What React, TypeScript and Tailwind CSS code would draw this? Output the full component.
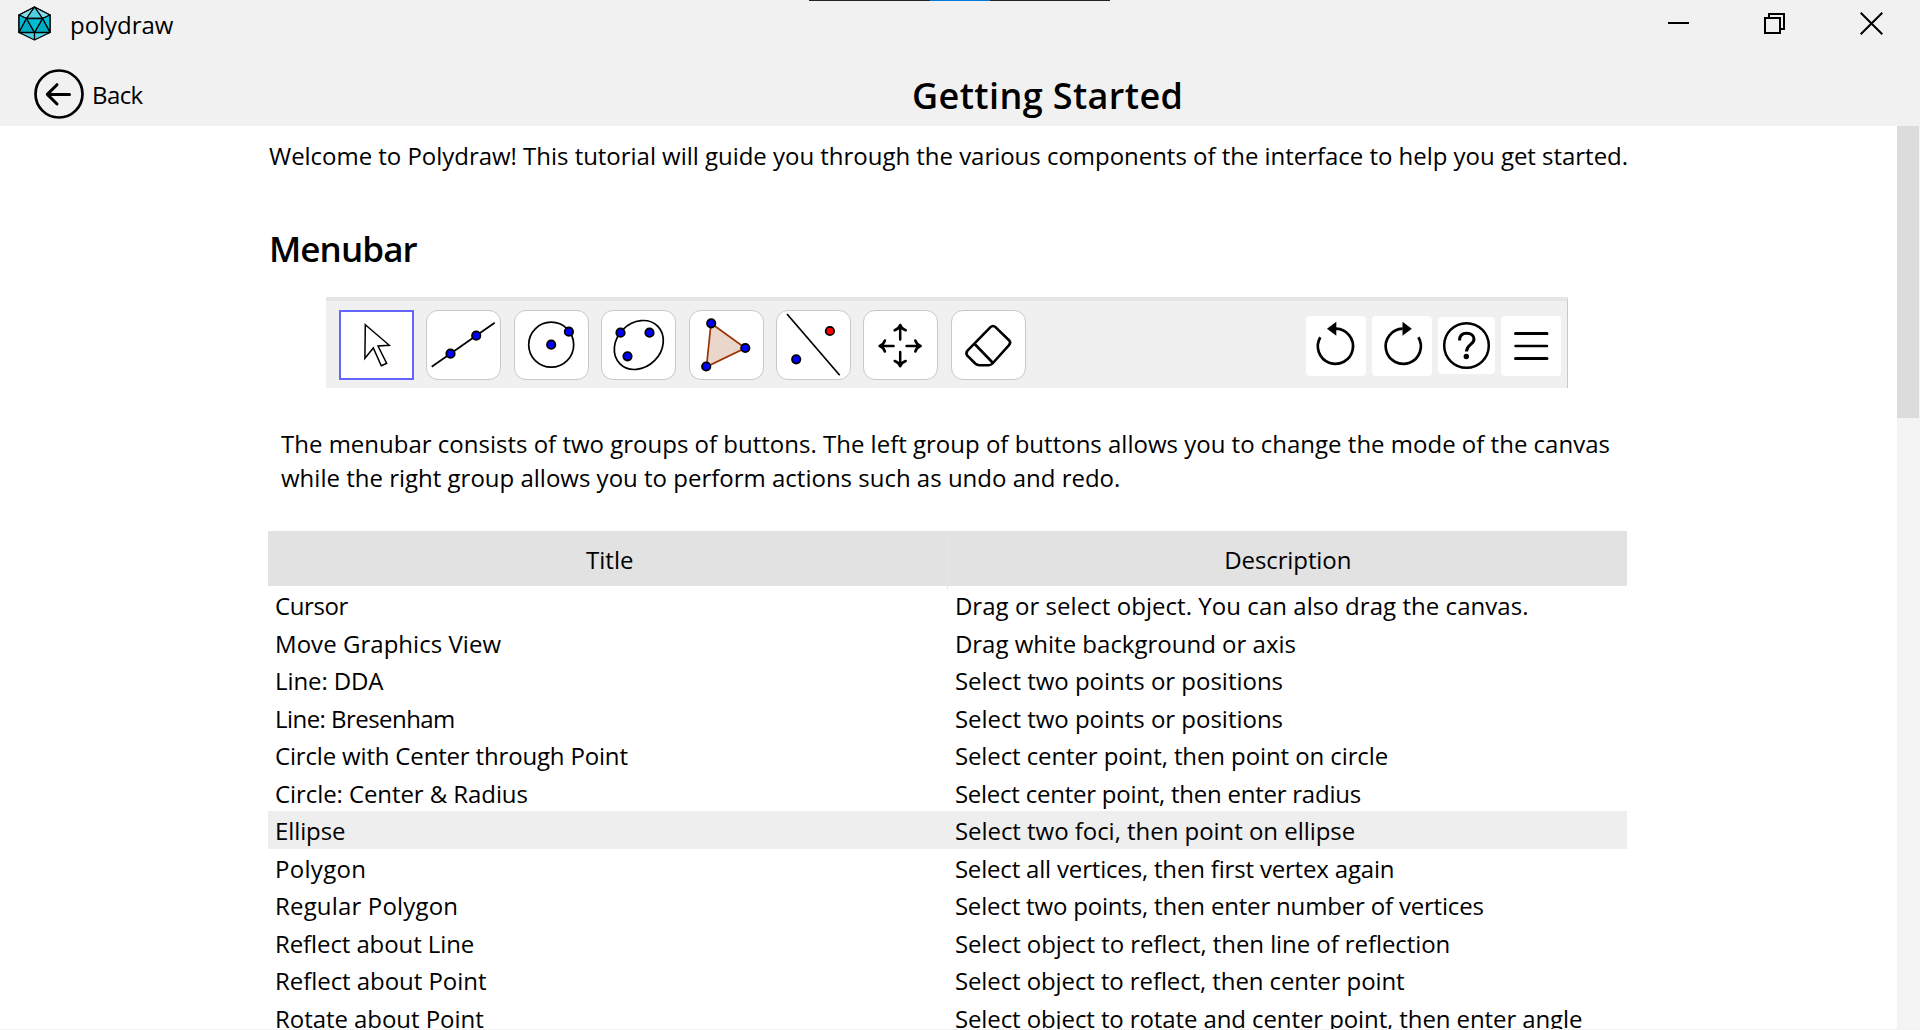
import type { ReactNode } from "react";

type Row = { title: string; titleClass: string; text: string; textClass: string; active?: boolean };

const rows: Row[] = [
  { title: "Cursor", titleClass: "tracking-[-0.4px]", text: "Drag or select object. You can also drag the canvas.", textClass: "tracking-[0.05px]" },
  { title: "Move Graphics View", titleClass: "tracking-[0.04px]", text: "Drag white background or axis", textClass: "tracking-[0px]" },
  { title: "Line: DDA", titleClass: "tracking-[-0.1px]", text: "Select two points or positions", textClass: "tracking-[-0.02px]" },
  { title: "Line: Bresenham", titleClass: "tracking-[-0.55px]", text: "Select two points or positions", textClass: "tracking-[-0.02px]" },
  { title: "Circle with Center through Point", titleClass: "tracking-[-0.17px]", text: "Select center point, then point on circle", textClass: "tracking-[-0.1px]" },
  { title: "Circle: Center & Radius", titleClass: "tracking-[-0.08px]", text: "Select center point, then enter radius", textClass: "tracking-[-0.24px]" },
  { title: "Ellipse", titleClass: "tracking-[-0.1px]", text: "Select two foci, then point on ellipse", textClass: "tracking-[-0.04px]", active: true },
  { title: "Polygon", titleClass: "tracking-[0.3px]", text: "Select all vertices, then first vertex again", textClass: "tracking-[-0.18px]" },
  { title: "Regular Polygon", titleClass: "tracking-[0.17px]", text: "Select two points, then enter number of vertices", textClass: "tracking-[-0.18px]" },
  { title: "Reflect about Line", titleClass: "tracking-[-0.1px]", text: "Select object to reflect, then line of reflection", textClass: "tracking-[-0.08px]" },
  { title: "Reflect about Point", titleClass: "tracking-[-0.05px]", text: "Select object to reflect, then center point", textClass: "tracking-[-0.1px]" },
  { title: "Rotate about Point", titleClass: "tracking-[-0.05px]", text: "Select object to rotate and center point, then enter angle", textClass: "tracking-[-0.1px]" },
];

function Dot({ x, y, color = "#0000ff" }: { x: number; y: number; color?: string }) {
  return <circle cx={x} cy={y} r="4.2" fill={color} stroke="#000" strokeWidth="1.8" />;
}

function Tool({ children, selected = false }: { children: ReactNode; selected?: boolean }) {
  return (
    <div
      className={
        selected
          ? "h-[70px] w-[75px] border-2 border-[#6464ff] bg-white"
          : "h-[70px] w-[75px] rounded-[12px] border border-[#c8c8c8] bg-white"
      }
    >
      <svg
        viewBox="0 0 75 70"
        className={selected ? "-m-0.5 h-[70px] w-[75px]" : "-m-px h-[70px] w-[75px]"}
        fill="none"
        stroke="#000"
        strokeWidth="1.7"
      >
        {children}
      </svg>
    </div>
  );
}

function Toolbar() {
  return (
    <div className="flex h-[91px] w-[1242px] justify-between border-t-4 border-r border-t-[#e5e5e5] border-r-[#c8c8c8] bg-[#f0f0f0] pr-[6px] pl-[13px]">
      <div className="flex gap-[12.4px] pt-[9px]">
        <Tool selected>
          <path d="M26.3 14.7 50.3 35.3 39 36 47.7 53.3 42.3 55.7 34.3 38 25.9 48.3Z" strokeWidth="1.5" />
        </Tool>
        <Tool>
          <path d="M5.7 56.7 68.7 12.7" />
          <Dot x={24.5} y={43.7} />
          <Dot x={50.2} y={25.7} />
        </Tool>
        <Tool>
          <circle cx="37.2" cy="34.7" r="22.5" />
          <Dot x={37.2} y={34.7} />
          <Dot x={54.9} y={21.7} />
        </Tool>
        <Tool>
          <ellipse cx="37.8" cy="35" rx="26.6" ry="22.2" transform="rotate(-45 37.8 35)" />
          <Dot x={19.5} y={22.7} />
          <Dot x={48.5} y={22.7} />
          <Dot x={26.5} y={46.3} />
        </Tool>
        <Tool>
          <path d="M22 13.3 56.3 38 17.5 56.7Z" fill="#ebd6cc" stroke="#993300" />
          <Dot x={22.2} y={13.3} />
          <Dot x={56.3} y={38} />
          <Dot x={17.2} y={56.5} />
        </Tool>
        <Tool>
          <path d="M11 4 63.7 65.3" />
          <Dot x={53.9} y={21} color="#ff0000" />
          <Dot x={20.2} y={49.3} />
        </Tool>
        <Tool>
          <g strokeWidth="2.5" strokeLinecap="round" strokeLinejoin="round">
            <path d="M37.2 15v14.5M31.7 20.3c3-1 4.6-2.7 5.5-5.3.9 2.6 2.5 4.3 5.5 5.3" />
            <path d="M37.2 42v14.3M31.7 51c3 1 4.6 2.7 5.5 5.3.9-2.6 2.5-4.3 5.5-5.3" />
            <path d="M16.6 36h14M21.9 30.5c-1 3-2.7 4.6-5.3 5.5 2.6.9 4.3 2.5 5.3 5.5" />
            <path d="M43.6 36h14M52.3 30.5c1 3 2.7 4.6 5.3 5.5-2.6.9-4.3 2.5-5.3 5.5" />
          </g>
        </Tool>
        <Tool>
          <path
            d="M39.5 17.2Q42 14.7 44.5 17.2L58 30.2Q60.3 32.7 58 35.2L41.5 53.5Q40 55.2 37.5 55.2H28.5Q26 55.2 24.2 53.5L16.3 45.6Q14.4 43.2 16.5 40.6ZM23.7 34 41.5 52.5"
            strokeWidth="2.6"
            strokeLinejoin="round"
          />
        </Tool>
      </div>
      <div className="flex items-start gap-[6px] pt-[15px]">
        <div className="size-[60px] rounded-[4px] bg-white">
          <svg viewBox="0 0 60 60" fill="none" stroke="#000" strokeWidth="2.7">
            <path d="M14.3 21.3A17.6 17.6 0 1 0 30 12.7" />
            <path d="M21 12.7 30.3 5.7V19.7Z" fill="#000" stroke="none" />
          </svg>
        </div>
        <div className="size-[60px] rounded-[4px] bg-white">
          <svg viewBox="0 0 60 60" fill="none" stroke="#000" strokeWidth="2.7">
            <path d="M46.4 21.3A17.6 17.6 0 1 1 30.7 12.7" />
            <path d="M39.8 12.7 30.5 5.7V19.7Z" fill="#000" stroke="none" />
          </svg>
        </div>
        <div className="mt-px size-[57px] rounded-[4px] bg-white">
          <svg viewBox="0 0 57 57" fill="none" stroke="#000" strokeWidth="2.5">
            <circle cx="28.5" cy="28.5" r="22.3" />
            <path d="M21.5 23.5C21.5 18.5 24.5 16.2 28.7 16.2 33 16.2 36 18.8 36 22.3 36 27.5 28.5 27.5 28.5 34.5" strokeWidth="3" />
            <circle cx="28.3" cy="39.5" r="2.7" fill="#000" stroke="none" />
          </svg>
        </div>
        <div className="size-[60px] rounded-[4px] bg-white">
          <svg viewBox="0 0 60 60" fill="none" stroke="#000" strokeWidth="3" strokeLinecap="round">
            <path d="M14.5 17.5H46M14.5 42.5H46" />
            <path d="M14.5 30H46" strokeWidth="2.5" />
          </svg>
        </div>
      </div>
    </div>
  );
}

function Logo() {
  return (
    <svg viewBox="0 0 33 35" className="h-[35px] w-[33px]" stroke="#000" strokeWidth="1.3" strokeLinejoin="round">
      <path d="M16.5 1 32 9V26.5L16.5 34 1 26.5V9Z" fill="#4dd0e1" />
      <path d="M16.5 1 32 9 24.5 12.5ZM16.5 1 1 9 8.5 12.5Z" fill="#80deea" />
      <path d="M16.5 1 24.5 12.5H8.5Z" fill="#4dd0e1" />
      <path d="M1 9 8.5 12.5 1 26.5ZM32 9 24.5 12.5 32 26.5Z" fill="#00bcd4" />
      <path d="M8.5 12.5 16.5 26.5H1ZM24.5 12.5 32 26.5H16.5Z" fill="#00acc1" />
      <path d="M8.5 12.5H24.5L16.5 26.5Z" fill="#00bcd4" />
      <path d="M16.5 26.5V34" />
    </svg>
  );
}

export default function App() {
  return (
    <div className="relative flex h-[1030px] w-[1920px] flex-col overflow-hidden bg-white font-['Open_Sans',sans-serif] text-[24px] text-black">
      <div className="absolute top-0 left-[809px] flex h-px w-[301px] justify-center bg-[#222]">
        <div className="h-px w-[60px] bg-[#0078d7]" />
      </div>

      <header className="flex h-[126px] shrink-0 flex-col bg-[#f1f1f1]">
        <div className="flex h-[47px] items-center pl-[18px]">
          <Logo />
          <span className="mt-[3px] ml-[19px] leading-[48px] tracking-[-0.05px]">polydraw</span>
          <div className="ml-auto flex items-center gap-[75px] pr-[37px]">
            <svg viewBox="0 0 21 23" className="h-[23px] w-[21px]" fill="none" stroke="#000" strokeWidth="2">
              <path d="M0 11H21" />
            </svg>
            <svg viewBox="0 0 21 23" className="h-[23px] w-[21px]" fill="none" stroke="#000" strokeWidth="2">
              <path d="M1 6H16V21H1ZM5 6V2H20V17H16" />
            </svg>
            <svg viewBox="0 0 23 23" className="h-[23px] w-[23px]" fill="none" stroke="#000" strokeWidth="2">
              <path d="M0.7 0.7 22.3 22.3M22.3 0.7 0.7 22.3" />
            </svg>
          </div>
        </div>
        <div className="flex h-[79px] items-center">
          <button className="flex h-[50px] w-[200px] items-center pl-[34px]">
            <svg viewBox="0 0 50 50" className="mt-[14px] size-[50px] shrink-0" fill="none" stroke="#000" strokeWidth="2.7" strokeLinecap="round" strokeLinejoin="round">
              <circle cx="25" cy="25" r="23.5" />
              <path d="M35.5 25.4H13.5M23 15.7 13.3 25.4 23 35" strokeWidth="3" />
            </svg>
            <span className="mt-[17px] ml-[8px] tracking-[-0.6px]">Back</span>
          </button>
          <h1 className="mt-[19px] ml-[712px] text-[36px] font-semibold tracking-[0.4px]">Getting Started</h1>
        </div>
      </header>

      <div className="flex h-[903px] shrink-0 overflow-hidden">
        <main className="ml-[268px] w-[1359px] shrink-0">
          <p className="pt-[13px] pl-px leading-[34px] tracking-[-0.03px] whitespace-nowrap">
            Welcome to Polydraw! This tutorial will guide you through the various components of the interface to help you get started.
          </p>
          <h2 className="mt-[52px] pl-px text-[35px] leading-[48px] font-semibold tracking-[-0.9px]">Menubar</h2>
          <div className="mt-[24px] ml-[58px]">
            <Toolbar />
          </div>
          <p className="mt-[39px] pl-[13px] leading-[34px] whitespace-nowrap">
            The menubar consists of two groups of buttons. The left group of buttons allows you to change the mode of the canvas
            <br />
            while the right group allows you to perform actions such as undo and redo.
          </p>
          <div className="mt-[36px] grid h-[55px] grid-cols-2 bg-[#e2e2e2] text-center leading-[58px]">
            <div className="border-r border-[#e6e6e6] pl-[5px]">Title</div>
            <div className="pl-px tracking-[-0.1px]">Description</div>
          </div>
          {rows.map((row) => (
            <div
              key={row.title}
              className={
                row.active
                  ? "grid h-[37.5px] grid-cols-2 bg-[#eee] leading-[40px] whitespace-nowrap"
                  : "grid h-[37.5px] grid-cols-2 leading-[40px] whitespace-nowrap"
              }
            >
              <div className={`pl-[7px] ${row.titleClass}`}>{row.title}</div>
              <div className={`pl-[7.4px] ${row.textClass}`}>{row.text}</div>
            </div>
          ))}
        </main>
        <div className="ml-auto w-[23px] bg-[#f4f4f4]">
          <div className="h-[292px] w-[22px] bg-[#dcdcdc]" />
        </div>
      </div>
      <div className="h-px shrink-0 bg-[#f2f2f2]" />
    </div>
  );
}
